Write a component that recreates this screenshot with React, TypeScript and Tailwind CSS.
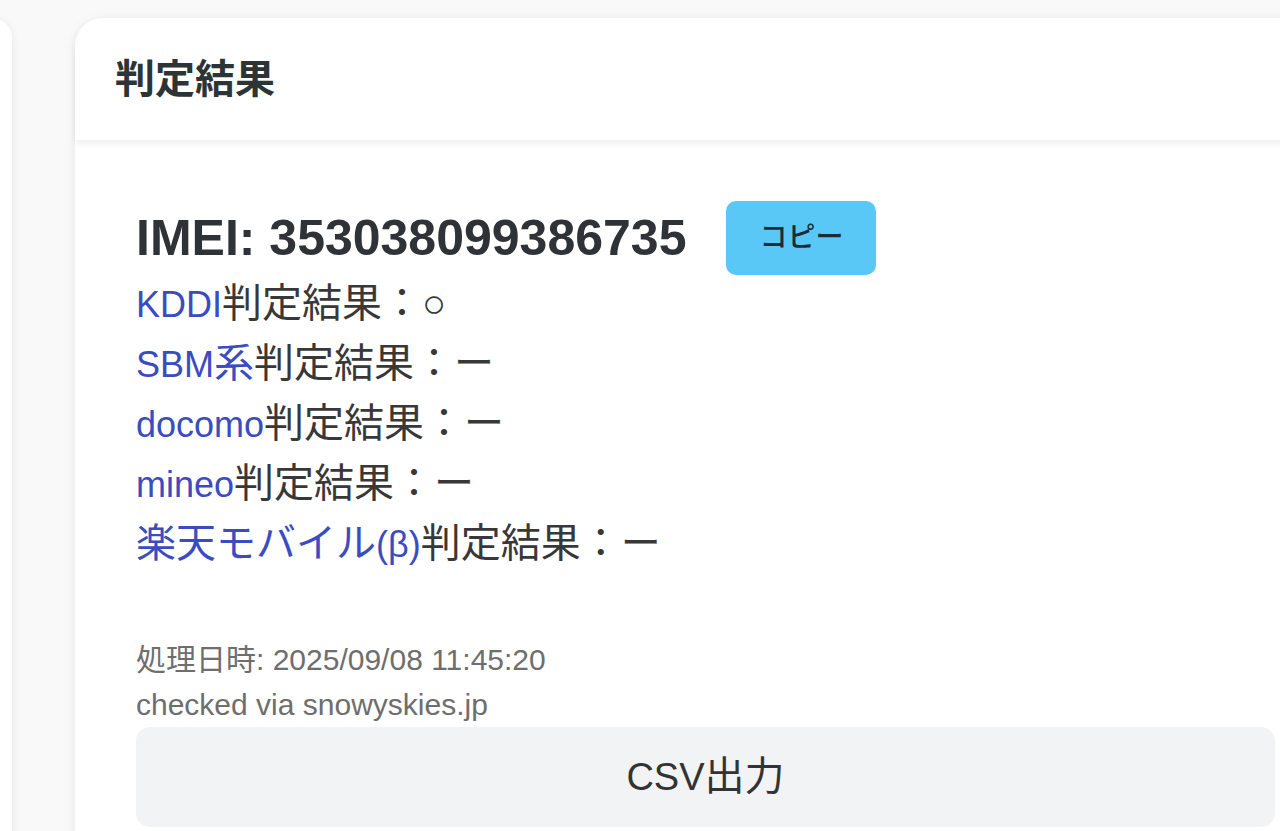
const carriers = [
  { name: 'KDDI', result: '○' },
  { name: 'SBM系', result: 'ー' },
  { name: 'docomo', result: 'ー' },
  { name: 'mineo', result: 'ー' },
  { name: '楽天モバイル(β)', result: 'ー' },
];

// 和文だけ少し大きく見えるので、和文の連続部分を別サイズで包む
function Jp({ text, cls }: { text: string; cls: string }) {
  const parts = text.split(/([\u3000-\u30ff\u4e00-\u9fff\uff00-\uffef○]+)/);
  return (
    <>
      {parts.map((p, i) =>
        i % 2 === 1 ? (
          <span key={i} className={cls}>
            {p}
          </span>
        ) : (
          p
        ),
      )}
    </>
  );
}

export default function App() {
  return (
    <div
      className="w-[1280px] h-[831px] overflow-hidden bg-[#f9f9f9] flex items-start pt-[18px] gap-[63px]"
      style={{ fontFamily: '"Liberation Sans", "Noto Sans CJK JP", sans-serif' }}
    >
      {/* 左側の別カード（端だけ見えている） */}
      <div className="w-[40px] h-[900px] -ml-[28px] shrink-0 rounded-[28px] bg-white shadow-[0_2px_10px_rgba(0,0,0,0.08)]" />

      <div className="w-[1261px] shrink-0 rounded-[28px] bg-white shadow-[0_2px_12px_rgba(0,0,0,0.08)]">
        {/* ヘッダー */}
        <div className="h-[122px] px-[40px] flex items-center rounded-t-[28px] bg-white shadow-[0_4px_6px_rgba(0,0,0,0.06)] relative">
          <h2 className="text-[40px] font-bold text-[#2d3436]">判定結果</h2>
        </div>

        {/* 本文 */}
        <div className="pl-[61px] pr-[61px] pt-[61px] pb-10">
          <div className="flex items-center h-[74px] gap-[40px]">
            <span className="text-[50px] font-bold text-[#2f3337] leading-none">IMEI: 353038099386735</span>
            <button className="w-[150px] h-[74px] rounded-[10px] bg-[#5ac8f7] text-[28px] font-medium text-[#1c2a3a] cursor-pointer">
              コピー
            </button>
          </div>

          <div className="flex flex-col">
            {carriers.map((c) => (
              <div key={c.name} className="h-[60px] text-[36px] leading-[60px] text-[#383838]">
                <span className="text-[#3b4cc0]">
                  <Jp text={c.name} cls="text-[40px] leading-none" />
                </span>
                <span className="text-[40px] leading-none">判定結果：{c.result}</span>
              </div>
            ))}
          </div>

          <div className="mt-[62px] text-[30px] leading-[45px] text-[#6e6e6e]">
            <p>処理日時: 2025/09/08 11:45:20</p>
            <p>checked via snowyskies.jp</p>
          </div>

          <button className="w-full h-[100px] rounded-[14px] bg-[#f2f3f5] text-[38px] text-[#333] cursor-pointer">
            CSV<span className="text-[40px] leading-none">出力</span>
          </button>
        </div>
      </div>
    </div>
  );
}
